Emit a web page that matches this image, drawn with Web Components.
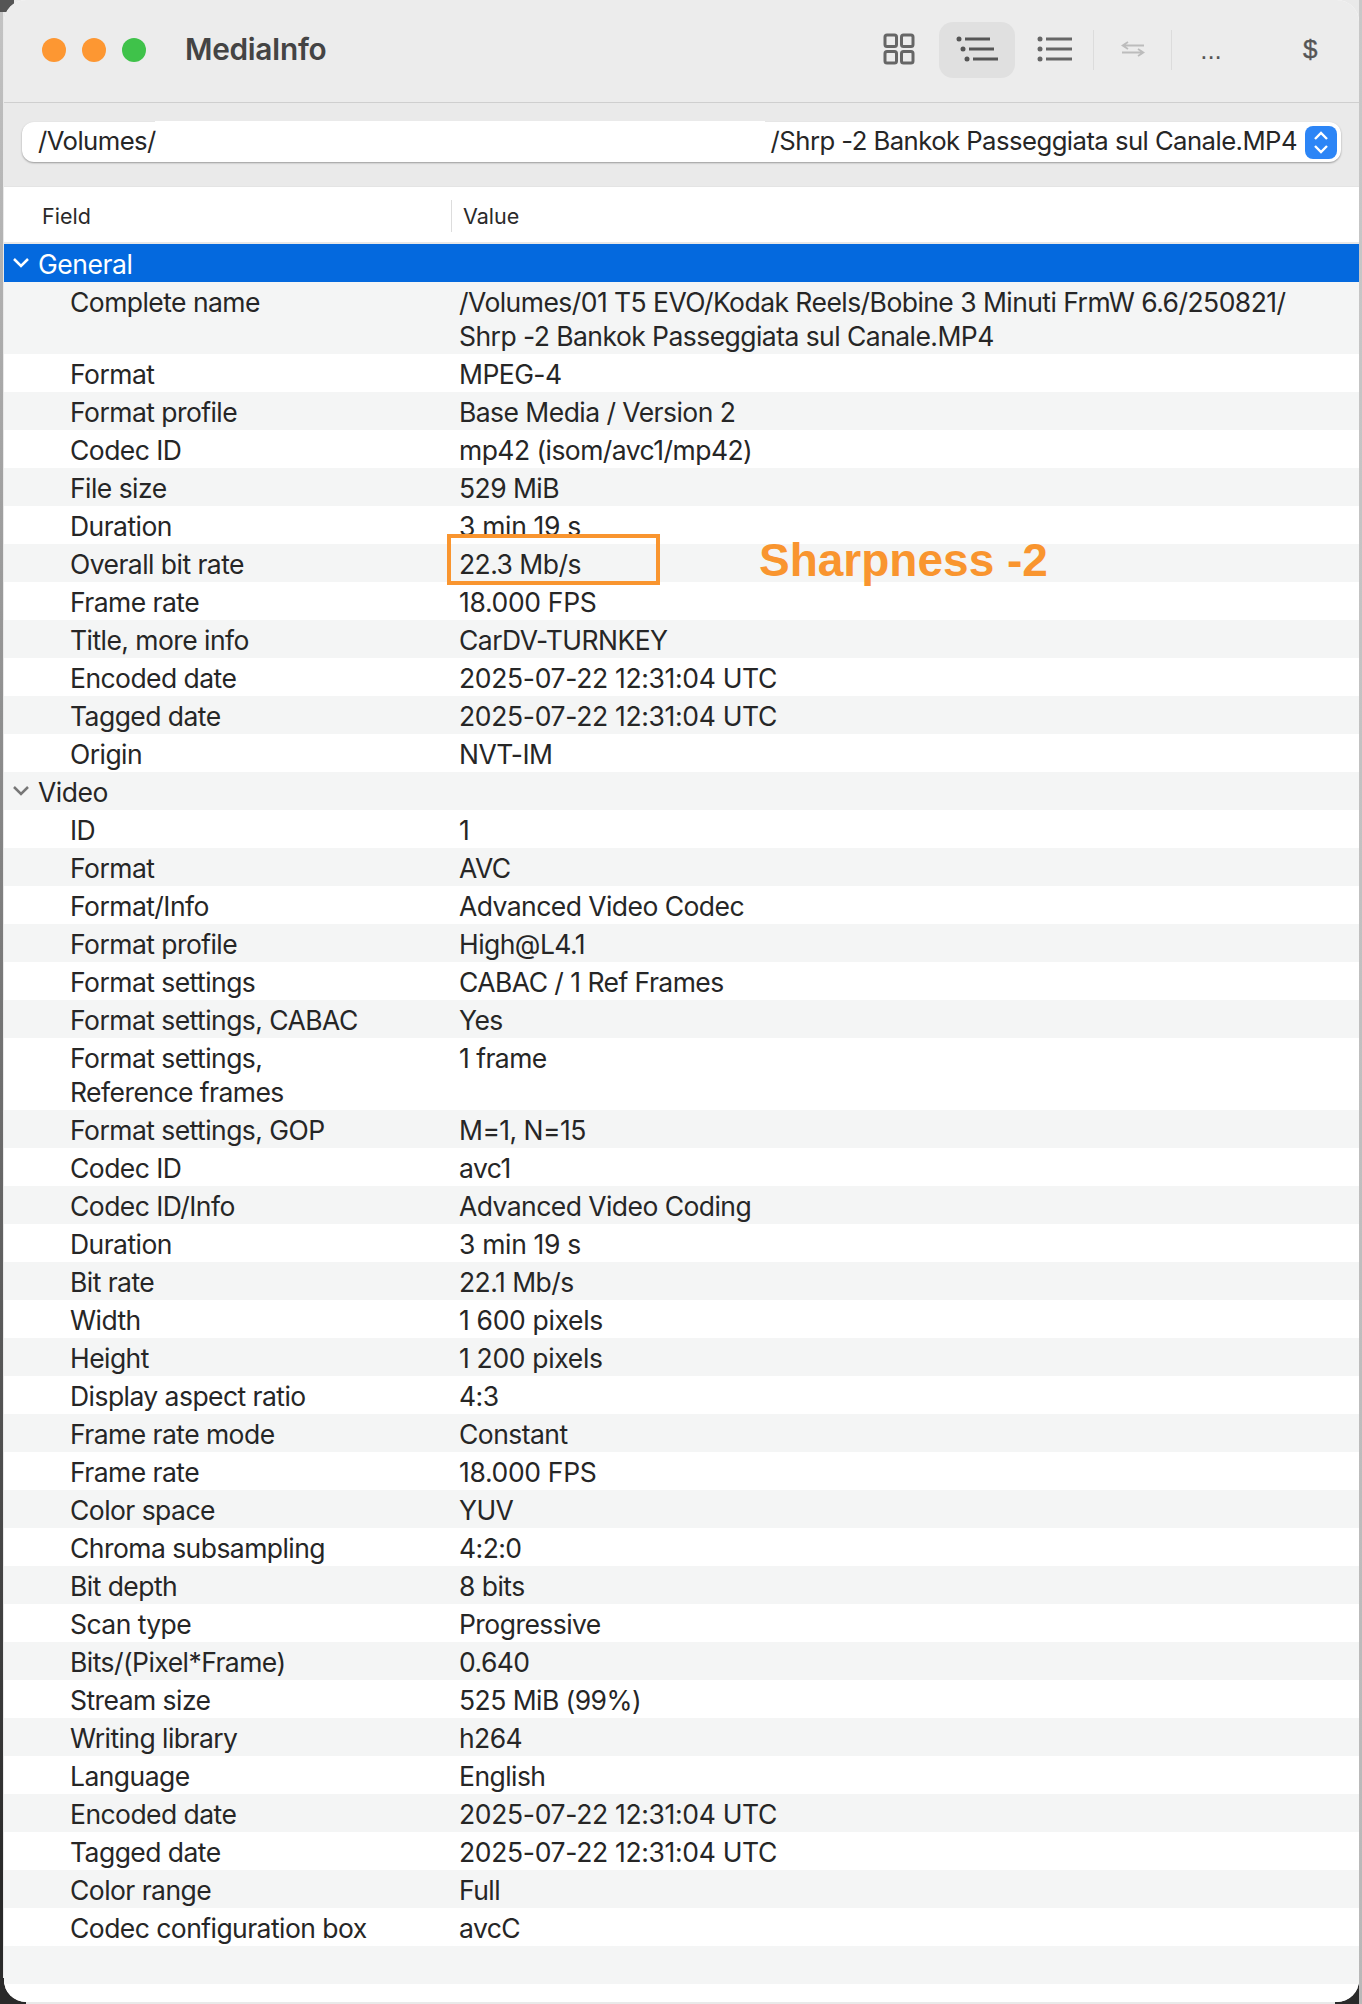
<!DOCTYPE html>
<html>
<head>
<meta charset="utf-8">
<title>MediaInfo</title>
<style>
  html, body { margin: 0; height: 2004px; overflow: hidden; background: #e9e9e9; }
  body {
    font-family: Inter, "Liberation Sans", sans-serif;
    color: #262626;
    background-color: #e9e9e9;
    background-repeat: no-repeat;
    background-image:
      linear-gradient(#2a2a2a, #2a2a2a),
      linear-gradient(#2a2a2a, #2a2a2a),
      linear-gradient(#555, #555),
      linear-gradient(#c4c4c4, #999 600px, #2a2a2a 1880px),
      linear-gradient(#c8c8c8, #b8b8b8);
    background-size: 26px 26px, 24px 26px, 14px 12px, 3px 100%, 3px 100%;
    background-position: 0 1978px, 1335px 1978px, 0 0, 0 0, 1359px 0;
  }
</style>
</head>
<body>
<mi-window>
  <mi-toolbar slot="top"></mi-toolbar>
  <mi-pathbar slot="top" start="/Volumes/" end="/Shrp -2 Bankok Passeggiata sul Canale.MP4"></mi-pathbar>
  <mi-table>
    <mi-group open selected>General</mi-group>
    <mi-row field="Complete name">/Volumes/01 T5 EVO/Kodak Reels/Bobine 3 Minuti FrmW 6.6/250821/<br>Shrp -2 Bankok Passeggiata sul Canale.MP4</mi-row>
    <mi-row field="Format">MPEG-4</mi-row>
    <mi-row field="Format profile">Base Media / Version 2</mi-row>
    <mi-row field="Codec ID">mp42 (isom/avc1/mp42)</mi-row>
    <mi-row field="File size">529 MiB</mi-row>
    <mi-row class="num" field="Duration">3 min 19 s</mi-row>
    <mi-row field="Overall bit rate">22.3 Mb/s</mi-row>
    <mi-row class="num" field="Frame rate">18.000 FPS</mi-row>
    <mi-row field="Title, more info">CarDV-TURNKEY</mi-row>
    <mi-row class="num" field="Encoded date">2025-07-22 12:31:04 UTC</mi-row>
    <mi-row class="num" field="Tagged date">2025-07-22 12:31:04 UTC</mi-row>
    <mi-row field="Origin">NVT-IM</mi-row>
    <mi-group open>Video</mi-group>
    <mi-row field="ID">1</mi-row>
    <mi-row field="Format">AVC</mi-row>
    <mi-row field="Format/Info">Advanced Video Codec</mi-row>
    <mi-row field="Format profile">High@L4.1</mi-row>
    <mi-row field="Format settings">CABAC / 1 Ref Frames</mi-row>
    <mi-row field="Format settings, CABAC">Yes</mi-row>
    <mi-row field="Format settings,|Reference frames">1 frame</mi-row>
    <mi-row field="Format settings, GOP">M=1, N=15</mi-row>
    <mi-row field="Codec ID">avc1</mi-row>
    <mi-row field="Codec ID/Info">Advanced Video Coding</mi-row>
    <mi-row class="num" field="Duration">3 min 19 s</mi-row>
    <mi-row field="Bit rate">22.1 Mb/s</mi-row>
    <mi-row class="num" field="Width">1 600 pixels</mi-row>
    <mi-row class="num" field="Height">1 200 pixels</mi-row>
    <mi-row field="Display aspect ratio">4:3</mi-row>
    <mi-row field="Frame rate mode">Constant</mi-row>
    <mi-row class="num" field="Frame rate">18.000 FPS</mi-row>
    <mi-row field="Color space">YUV</mi-row>
    <mi-row field="Chroma subsampling">4:2:0</mi-row>
    <mi-row field="Bit depth">8 bits</mi-row>
    <mi-row field="Scan type">Progressive</mi-row>
    <mi-row field="Bits/(Pixel*Frame)">0.640</mi-row>
    <mi-row field="Stream size">525 MiB (99%)</mi-row>
    <mi-row field="Writing library">h264</mi-row>
    <mi-row field="Language">English</mi-row>
    <mi-row class="num" field="Encoded date">2025-07-22 12:31:04 UTC</mi-row>
    <mi-row class="num" field="Tagged date">2025-07-22 12:31:04 UTC</mi-row>
    <mi-row field="Color range">Full</mi-row>
    <mi-row field="Codec configuration box">avcC</mi-row>
    <mi-row></mi-row>
    <mi-row></mi-row>
  </mi-table>
  <mi-callout label="Sharpness -2"></mi-callout>
</mi-window>

<script>
class MiWindow extends HTMLElement {
  constructor() {
    super();
    this.attachShadow({ mode: 'open' });
    this.shadowRoot.innerHTML = `
      <style>
        :host {
          display: block;
          position: relative;
          height: 2002px;
          box-sizing: border-box;
          overflow: hidden;
          background: #fff;
          border-radius: 22px;
          margin: 0 3px 0 4px;
        }
      </style>
      <slot name="top"></slot>
      <slot></slot>
    `;
  }
}

class MiToolbar extends HTMLElement {
  constructor() {
    super();
    this.attachShadow({ mode: 'open' });
    this.shadowRoot.innerHTML = `
      <style>
        :host {
          display: flex;
          align-items: center;
          height: 103px;
          box-sizing: border-box;
          padding-bottom: 1px;
          border-bottom: 1px solid #cfcfcf;
          background: #ececec;
        }
        .lights { display: flex; gap: 16px; margin-left: 38px; margin-top: -2px; }
        .lights i { width: 24px; height: 24px; border-radius: 50%; background: #fd9732; }
        .lights i:last-child { background: #3fc24a; }
        h1 {
          margin: -3px 0 0 39px;
          font: 600 29.800px Inter, "Liberation Sans", sans-serif;
          letter-spacing: -0.3px;
          color: #444;
          flex: 1;
        }
        .tools { display: flex; align-items: center; height: 100%; box-sizing: border-box; padding-bottom: 2px; }
        svg { display: block; margin-top: -2px; }
        .btn {
          width: 76px;
          height: 56px;
          border-radius: 14px;
          display: flex;
          align-items: center;
          justify-content: center;
        }
        .btn.on { background: #e0e0e0; }
        .sep { width: 1px; height: 40px; background: #dcdcdc; }
        .more, .dollar { color: #555; font-family: "Liberation Sans", sans-serif; }
        .more { font-size: 26px; width: 78px; text-align: center; position: relative; top: 1px; }
        .dollar { font-size: 26px; margin: 0 0 0 53px; width: 56px; -webkit-text-stroke: 0.4px #555; }
      </style>
      <div class="lights"><i></i><i></i><i></i></div>
      <h1>MediaInfo</h1>
      <div class="tools">
        <div class="btn" style="margin-right:2px">
          <svg width="32" height="32" viewBox="0 0 32 32" fill="none" stroke="#666" stroke-width="3">
            <rect x="2" y="2" width="11.500" height="11.500" rx="2"/>
            <rect x="18.500" y="2" width="11.500" height="11.500" rx="2"/>
            <rect x="2" y="18.500" width="11.500" height="11.500" rx="2"/>
            <rect x="18.500" y="18.500" width="11.500" height="11.500" rx="2"/>
          </svg>
        </div>
        <div class="btn on">
          <svg width="42" height="26" viewBox="0 0 42 26" fill="#555" stroke="#555">
            <g stroke="none"><circle cx="3" cy="3" r="2.500"/><circle cx="7" cy="13" r="2.500"/><circle cx="11" cy="23" r="2.500"/></g>
            <path d="M9 3h25M13 13h25M17 23h25" stroke-width="3" fill="none"/>
          </svg>
        </div>
        <div class="btn" style="margin-left:2px">
          <svg width="36" height="26" viewBox="0 0 36 26" fill="#666" stroke="#666">
            <g stroke="none"><circle cx="3" cy="3" r="2.500"/><circle cx="3" cy="13" r="2.500"/><circle cx="3" cy="23" r="2.500"/></g>
            <path d="M9 3h26M9 13h26M9 23h26" stroke-width="3" fill="none"/>
          </svg>
        </div>
        <div class="sep"></div>
        <div class="btn" style="width:77px">
          <svg width="24" height="16" viewBox="0 0 24 16" fill="none" stroke="#bcbcbc" stroke-width="1.800">
            <path d="M23 4.500H2M7 1L1.500 4.500 7 8M1 11.500H22M17 8L22.500 11.500 17 15"/>
          </svg>
        </div>
        <div class="sep"></div>
        <div class="more">...</div>
        <div class="dollar">$</div>
      </div>
    `;
  }
}

class MiPathbar extends HTMLElement {
  constructor() {
    super();
    this.attachShadow({ mode: 'open' });
    this.shadowRoot.innerHTML = `
      <style>
        :host {
          display: block;
          height: 84px;
          box-sizing: border-box;
          padding: 19px 18px 0 18px;
          background: #eaeaea;
          border-bottom: 1px solid #e4e4e4;
        }
        .field {
          display: flex;
          align-items: center;
          position: relative;
          height: 40px;
          box-sizing: border-box;
          padding: 0 4px 0 16px;
          background: #fff;
          border-radius: 12px;
          box-shadow: 0 1px 2px rgba(0,0,0,.35);
          font: 25.700px Inter, "Liberation Sans", sans-serif;
          letter-spacing: -0.55px;
          color: #262626;
        }
        .field span { margin-top: -4px; }
        .field .end { margin-left: auto; margin-right: 8px; }
        .patch {
          position: absolute;
          left: 133px;
          right: 576px;
          top: -1px;
          height: 6px;
          background: #fff;
        }
        .stepper {
          width: 32px;
          height: 33px;
          border-radius: 8px;
          background: #2c85f6;
          display: flex;
          align-items: center;
          justify-content: center;
        }
      </style>
      <div class="field">
        <div class="patch"></div>
        <span>${this.getAttribute('start')}</span>
        <span class="end">${this.getAttribute('end')}</span>
        <div class="stepper">
          <svg width="16" height="25" viewBox="0 0 16 25" fill="none" stroke="#fff" stroke-width="2.400">
            <path d="M2 9L8 3l6 6M2 16l6 6 6-6"/>
          </svg>
        </div>
      </div>
    `;
  }
}

class MiTable extends HTMLElement {
  constructor() {
    super();
    this.attachShadow({ mode: 'open' });
    this.shadowRoot.innerHTML = `
      <style>
        :host { display: block; background: #fff; }
        header {
          display: grid;
          grid-template-columns: 447px 1fr;
          align-items: center;
          height: 57px;
          box-sizing: border-box;
          padding-top: 2px;
          border-bottom: 2px solid #e8e8e8;
          font-size: 21.500px;
          color: #2a2a2a;
        }
        header span:first-child { padding-left: 38px; }
        header span:last-child {
          border-left: 1px solid #ddd;
          padding-left: 11px;
          line-height: 32px;
        }
      </style>
      <header><span>Field</span><span>Value</span></header>
      <slot></slot>
    `;
  }
}

class MiGroup extends HTMLElement {
  constructor() {
    super();
    this.attachShadow({ mode: 'open' });
    this.shadowRoot.innerHTML = `
      <style>
        :host {
          display: flex;
          align-items: center;
          height: 38px;
          font-size: 26.500px;
          letter-spacing: -0.45px;
          padding-top: 1px;
          box-sizing: border-box;
        }
        :host(:nth-child(even)) { background: #f4f5f5; }
        :host([selected]) { background: #0469de; color: #fff; }
        svg { margin: -2px 8px 0 8px; }
      </style>
      <svg width="18" height="12" viewBox="0 0 18 12" fill="none" stroke="currentColor" stroke-width="2.500">
        <path d="M2 2l7 7 7-7"/>
      </svg>
      <slot></slot>
    `;
    if (!this.hasAttribute('selected')) this.shadowRoot.querySelector('svg').style.color = '#777';
  }
}

class MiRow extends HTMLElement {
  constructor() {
    super();
    this.attachShadow({ mode: 'open' });
    const field = (this.getAttribute('field') || '').split('|').join('<br>');
    this.shadowRoot.innerHTML = `
      <style>
        :host {
          display: grid;
          grid-template-columns: 66px 389px 1fr;
          min-height: 38px;
          box-sizing: border-box;
          padding: 3px 0 1px;
          font-size: 26.500px;
          line-height: 34px;
          letter-spacing: -0.55px;
          color: #262626;
        }
        :host(:nth-child(even)) { background: #f4f5f5; }
        :host(.num) .v { letter-spacing: -0.33px; }
        .f { grid-column: 2; }
      </style>
      <div class="f">${field}</div>
      <div class="v"><slot></slot></div>
    `;
  }
}

class MiCallout extends HTMLElement {
  constructor() {
    super();
    this.attachShadow({ mode: 'open' });
    this.shadowRoot.innerHTML = `
      <style>
        :host { display: contents; }
        .box {
          position: absolute;
          left: 443px;
          top: 534px;
          width: 213px;
          height: 51px;
          box-sizing: border-box;
          border: 4px solid #f9952f;
        }
        .txt {
          position: absolute;
          left: 755px;
          top: 533px;
          font: bold 46px/54px "Liberation Sans", sans-serif;
          color: #f9952f;
          white-space: nowrap;
        }
      </style>
      <div class="box"></div>
      <div class="txt">${this.getAttribute('label')}</div>
    `;
  }
}

customElements.define('mi-window', MiWindow);
customElements.define('mi-toolbar', MiToolbar);
customElements.define('mi-pathbar', MiPathbar);
customElements.define('mi-table', MiTable);
customElements.define('mi-group', MiGroup);
customElements.define('mi-row', MiRow);
customElements.define('mi-callout', MiCallout);
</script>
</body>
</html>
